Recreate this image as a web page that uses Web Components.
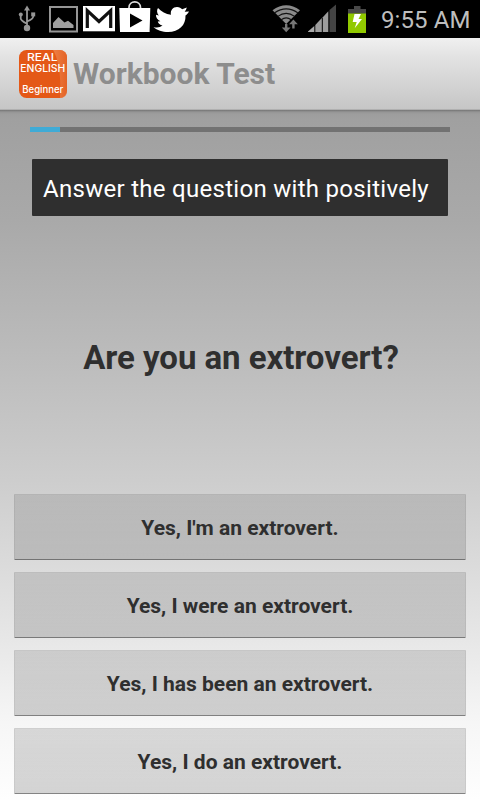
<!DOCTYPE html>
<html lang="en">
<head>
<meta charset="utf-8">
<title>Workbook Test</title>
<style>
body {
  margin: 0;
  background: #000;
  font-family: Roboto, "Noto Sans", sans-serif;
}
</style>
</head>
<body>
<workbook-app>
  <status-bar slot="status" time="9:55 AM"></status-bar>
  <action-bar slot="header">
    <app-logo slot="logo"></app-logo>
    Workbook Test
  </action-bar>
  <progress-line value="30" max="420"></progress-line>
  <task-hint>Answer the question with positively</task-hint>
  <quiz-question>Are you an extrovert?</quiz-question>
  <answer-list>
    <answer-button>Yes, I'm an extrovert.</answer-button>
    <answer-button>Yes, I were an extrovert.</answer-button>
    <answer-button>Yes, I has been an extrovert.</answer-button>
    <answer-button>Yes, I do an extrovert.</answer-button>
  </answer-list>
</workbook-app>

<script>
/**
 * Base element: puts the markup of the class in an open shadow root
 */
class BaseElement extends HTMLElement {
  constructor() {
    super();
    const template = document.createElement("template");
    template.innerHTML = this.constructor.markup;
    this.attachShadow({ mode: "open" });
    this.shadowRoot.appendChild(template.content.cloneNode(true));
  }
}

/**
 * Page frame: status bar, header and the quiz content
 */
class WorkbookApp extends BaseElement {
  static markup = `
<style>
:host {
  display: flex;
  flex-direction: column;
  width: 480px;
  height: 800px;
  overflow: hidden;
}
main {
  flex: 1;
  display: flex;
  flex-direction: column;
  box-sizing: border-box;
  padding: 17px 14px 6px;
  background: linear-gradient(#747474 0, #959595 2px, #9d9d9d 4px, #a0a0a0 9px, #a9a9a9 110px, #b8b8b8 220px, #cdcdcd 370px, #e7e7e7 530px, #f6f6f6 612px, #fefefe 690px);
}
</style>
<slot name="status"></slot>
<slot name="header"></slot>
<main><slot></slot></main>`;
}

/**
 * Status bar. Icons share the vertical scale of the bar.
 */
class StatusBar extends BaseElement {
  static markup = `
<style>
:host {
  display: flex;
  height: 38px;
  padding: 0 10px 0 18px;
  background: #000;
  color: #bebebe;
}
svg { display: block; flex: none; height: 38px; }
.group { display: flex; }
.right { margin-left: auto; }
.time {
  width: 89px;
  margin-left: 15px;
  font-size: 24px;
  line-height: 40px;
  letter-spacing: 0.1px;
  text-align: right;
  white-space: nowrap;
}
</style>
<div class="group">
  <svg width="31" viewBox="18 0 31 38" fill="none" stroke="#969696" stroke-width="1.8">
    <path d="M27 9V28M20.7 16V18.5Q20.7 20.5 27 23.8M33.2 14V16.5Q33.2 19 27 21.5"/>
    <path d="M27 5.5L30 10.5H24Z" fill="#969696" stroke="none"/>
    <circle cx="27" cy="28" r="3.2" fill="#969696" stroke="none"/>
    <circle cx="20.8" cy="14.6" r="2" fill="#969696" stroke="none"/>
    <path d="M31.2 12.4h4v4h-4z" fill="#969696" stroke="none"/>
  </svg>
  <svg width="34" viewBox="49 0 34 38">
    <path d="M50 7h27v24.5H50z" fill="none" stroke="#969696" stroke-width="2"/>
    <path d="M53 28V23L58.5 17L64.5 22.5L68 20.7L73.5 25V28Z" fill="#a0a0a0"/>
  </svg>
  <svg width="36" viewBox="83 0 36 38">
    <path d="M83 6h32v25.3H83z" fill="#fff"/>
    <path d="M87.3 28V10.6L99 21.5L110.7 10.6V28" fill="none" stroke="#111" stroke-width="3.2"/>
  </svg>
  <svg width="34" viewBox="119 0 34 38">
    <path d="M129 9V7.5C129 0 140.5 0 140.5 7.5V9" fill="none" stroke="#ddd" stroke-width="1.7"/>
    <path d="M119.3 8h31l-.7 24h-29.6z" fill="#fff"/>
    <path d="M130 13.5V27.5L142.5 20.5Z" fill="#000"/>
  </svg>
  <svg width="37" viewBox="153 0 37 38">
    <path fill="#fff" d="M153.5 27C157 28 160 27.5 162.5 25.6C160 25 158.3 23.5 157.8 21.5L160.4 21.3C157.4 19.8 155.8 17.5 156 14.8L158.8 15.6C156.8 13.3 156.5 10.3 158 8C161.5 11.8 165.5 14 171 14.8C170 10.5 173 7 177 7C179.5 7 181 8 182.2 9.3L186.8 7.6C186.3 9.5 185.6 10.7 184.7 11.7L189 11.4C188 13.2 187 14.5 185.5 15.5C186 25 179 32 168 32C162.5 32 157 30.5 153.5 27Z"/>
  </svg>
</div>
<div class="group right">
  <svg width="36" viewBox="272 0 36 38">
    <path d="M272.5 10.2Q286.2 0.5 300 10.2L286.2 24Z" fill="#8a8a8a"/>
    <g fill="none" stroke="#111" stroke-width="1.1">
      <path d="M274.4 13Q286.2 4.8 298 13"/>
      <path d="M277.8 16.4Q286.2 10.4 294.6 16.4"/>
      <path d="M281.2 19.7Q286.2 16 291.2 19.7"/>
    </g>
    <path d="M285 24V27.5H281.8L286.2 32.3L290.6 27.5H287.4V24ZM292.2 28.5V24.2H289L293.4 19.4L297.8 24.2H294.6V28.5Z" fill="#777"/>
  </svg>
  <svg width="40" viewBox="308 0 40 38">
    <path d="M307.5 32L314.3 26V32Z" fill="#aaa"/>
    <path d="M315.3 25L321.8 18V32H315.3Z" fill="#9d9d9d"/>
    <path d="M322.8 17.2L328.3 11.2V32H322.8Z" fill="#9d9d9d"/>
    <path d="M329.5 10L336 4.5V32H329.5Z" fill="#444"/>
  </svg>
  <svg width="18" viewBox="348 0 18 38">
    <path d="M354 6h6.5v3H366v5H348V9h6z" fill="#494949"/>
    <path d="M348 13.5h18V33H348z" fill="#91c900"/>
    <path d="M354.5 14H361L358.5 19H362L354.7 28.2L356.7 22H352.7Z" fill="#fff"/>
  </svg>
  <div class="time"></div>
</div>`;

  connectedCallback() {
    this.shadowRoot.querySelector(".time").textContent = this.getAttribute("time");
  }
}

/**
 * Header with the logo and the title of the activity
 */
class ActionBar extends BaseElement {
  static markup = `
<style>
:host {
  display: flex;
  align-items: center;
  box-sizing: border-box;
  height: 72px;
  padding: 1px 19px 0;
  gap: 6px;
  background: linear-gradient(#f0f0f0, #e3e3e3 18px, #c6c6c6);
  border-bottom: 1px solid #b0b0b0;
  color: #8d8d8d;
}
h1 {
  margin: 0;
  font-size: 30px;
  line-height: 36px;
  font-weight: 700;
  white-space: nowrap;
}
</style>
<slot name="logo"></slot>
<h1><slot></slot></h1>`;
}

/**
 * Launcher icon
 */
class AppLogo extends BaseElement {
  static markup = `
<style>
:host { display: block; width: 48px; height: 48px; }
svg { display: block; }
text { fill: #fff; font-family: Inter, sans-serif; font-weight: 500; }
</style>
<svg width="48" height="48" viewBox="0 0 48 48">
  <defs>
    <linearGradient id="shine" x2="1" y2="0">
      <stop offset="0" stop-color="#f08a50"/>
      <stop offset="1" stop-color="#e4662a"/>
    </linearGradient>
  </defs>
  <rect width="48" height="48" rx="7.5" fill="#e45817"/>
  <path d="M34 0H40.5Q48 0 48 7.5V40.5Q48 48 41 48C42.5 30 40 9 34 0Z" fill="url(#shine)" opacity=".8"/>
  <text x="8" y="11.3" font-size="10.8" textLength="30.5" lengthAdjust="spacingAndGlyphs">REAL</text>
  <text x="1.3" y="22" font-size="10.8" textLength="45" lengthAdjust="spacingAndGlyphs">ENGLISH</text>
  <text x="3.3" y="43.3" font-size="10" textLength="41" lengthAdjust="spacingAndGlyphs">Beginner</text>
</svg>`;
}

/**
 * Thin progress bar, filled up to value / max
 */
class ProgressLine extends BaseElement {
  static markup = `
<style>
:host {
  display: block;
  flex: none;
  height: 5px;
  margin: 0 16px;
  background: #727272;
}
div { height: 100%; background: #3fabd6; }
</style>
<div></div>`;

  connectedCallback() {
    const ratio = this.getAttribute("value") / this.getAttribute("max");
    this.shadowRoot.querySelector("div").style.width = ratio * 100 + "%";
  }
}

class TaskHint extends BaseElement {
  static markup = `
<style>
:host {
  display: block;
  flex: none;
  box-sizing: border-box;
  height: 57px;
  margin: 27px 18px 0;
  padding-left: 11px;
  border-radius: 1px;
  background: #2f2f2f;
  color: #fff;
  font-size: 24px;
  letter-spacing: 0.29px;
  line-height: 60px;
  white-space: nowrap;
}
</style>
<slot></slot>`;
}

class QuizQuestion extends BaseElement {
  static markup = `
<style>
:host {
  flex: 1;
  display: flex;
  align-items: center;
  justify-content: center;
  padding: 4px 0 0 2px;
  color: #2f2f2f;
  font-size: 33px;
  font-weight: 700;
  letter-spacing: -0.05px;
  white-space: nowrap;
}
</style>
<slot></slot>`;
}

class AnswerList extends BaseElement {
  static markup = `
<style>
:host { display: flex; flex: none; flex-direction: column; gap: 12px; }
</style>
<slot></slot>`;
}

class AnswerButton extends BaseElement {
  static markup = `
<style>
:host { display: block; height: 66px; }
button {
  display: block;
  box-sizing: border-box;
  width: 100%;
  height: 100%;
  margin: 0;
  padding: 1px 0 0;
  border: 1px solid rgba(0, 0, 0, 0.05);
  border-top-color: transparent;
  border-bottom: 1px solid rgba(0, 0, 0, 0.4);
  border-radius: 1px;
  background: linear-gradient(rgba(120, 120, 120, 0.25), rgba(120, 120, 120, 0.31));
  color: #2f2f2f;
  font: inherit;
  font-size: 21px;
  font-weight: 700;
  white-space: nowrap;
}
</style>
<button><slot></slot></button>`;
}

customElements.define("workbook-app", WorkbookApp);
customElements.define("status-bar", StatusBar);
customElements.define("action-bar", ActionBar);
customElements.define("app-logo", AppLogo);
customElements.define("progress-line", ProgressLine);
customElements.define("task-hint", TaskHint);
customElements.define("quiz-question", QuizQuestion);
customElements.define("answer-list", AnswerList);
customElements.define("answer-button", AnswerButton);
</script>
</body>
</html>
